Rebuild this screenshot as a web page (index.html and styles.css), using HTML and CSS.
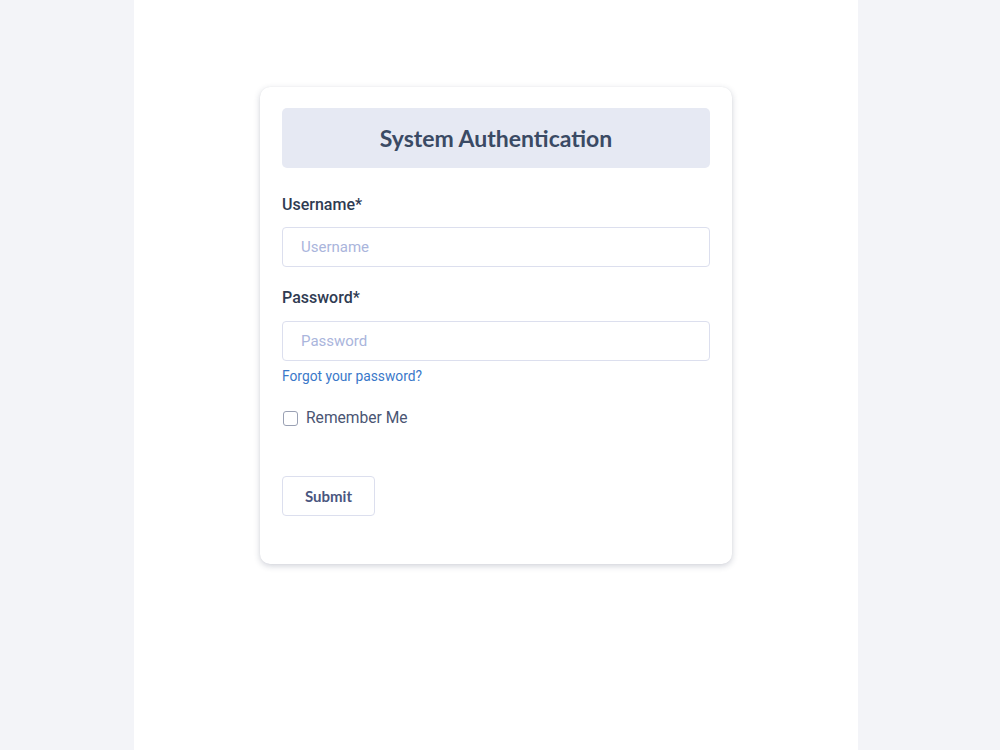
FILE: index.html
```html
<!DOCTYPE html>
<html lang="en">
<head>
    <meta charset="UTF-8">
    <meta name="viewport" content="width=device-width, initial-scale=1.0">
    <title>System Authentication</title>
    <link rel="stylesheet" href="styles.css">
</head>
<body>
    <div class="page">
        <div class="login-card">
            <div class="login-header">
                <h1>System Authentication</h1>
            </div>
            <form class="login-form">
                <label class="field-label" for="username">Username*</label>
                <input class="field-input" type="text" id="username" placeholder="Username">

                <label class="field-label field-label--gap" for="password">Password*</label>
                <input class="field-input" type="password" id="password" placeholder="Password">
                <a class="forgot-link" href="#">Forgot your password?</a>

                <label class="remember">
                    <input type="checkbox" class="remember-box">
                    <span>Remember Me</span>
                </label>

                <button type="submit" class="submit-btn">Submit</button>
            </form>
        </div>
    </div>
</body>
</html>
```

FILE: styles.css
```css
body {
    margin: 0;
    padding: 0;
    background-color: #f3f4f8;
    font-family: Roboto, "Liberation Sans", sans-serif;
    color: #2f3b52;
}

.page {
    width: 724px;
    min-height: 750px;
    margin-left: 134px;
    background-color: #ffffff;
    padding-top: 87px;
    box-sizing: border-box;
}

.login-card {
    width: 472px;
    margin: 0 auto;
    box-sizing: border-box;
    padding: 21px 22px 48px 22px;
    background-color: #ffffff;
    border-radius: 10px;
    box-shadow: 0 2px 6px rgba(40, 50, 80, 0.22), 0 0 1px rgba(40, 50, 80, 0.08);
}

.login-header {
    height: 60px;
    background-color: #e6e9f3;
    border-radius: 5px;
    display: flex;
    align-items: center;
    justify-content: center;
}

.login-header h1 {
    margin: 0;
    font-family: Lato, "Open Sans", sans-serif;
    font-weight: 700;
    font-size: 23px;
    color: #3a4a64;
}

.login-form {
    display: flex;
    flex-direction: column;
    align-items: flex-start;
}

.field-label {
    display: block;
    margin-top: 27px;
    font-size: 16px;
    line-height: 20px;
    font-weight: 500;
    color: #2f3b52;
}

.field-label--gap {
    margin-top: 21px;
}

.field-input {
    width: 100%;
    height: 40px;
    box-sizing: border-box;
    margin-top: 12px;
    padding: 0 18px;
    border: 1px solid #dcdfee;
    border-radius: 4px;
    font-family: Roboto, "Liberation Sans", sans-serif;
    font-size: 15px;
    color: #2f3b52;
    outline: none;
}

.field-label--gap + .field-input {
    margin-top: 13px;
}

.field-input::placeholder {
    color: #aab5dc;
}

.forgot-link {
    margin-top: 5px;
    font-size: 13.8px;
    line-height: 20px;
    color: #3a78c9;
    text-decoration: none;
}

.remember {
    display: flex;
    align-items: center;
    margin-top: 22px;
    height: 20px;
    font-size: 15.6px;
    color: #4a5573;
}

.remember-box {
    appearance: none;
    width: 15px;
    height: 15px;
    margin: 0 8px 0 1px;
    border: 1px solid #9aa1b4;
    border-radius: 3px;
    background-color: #ffffff;
}

.submit-btn {
    margin-top: 48px;
    width: 93px;
    height: 40px;
    padding-bottom: 2px;
    background-color: #ffffff;
    border: 1px solid #dcdfee;
    border-radius: 4px;
    font-family: Lato, "Open Sans", sans-serif;
    font-weight: 700;
    font-size: 15px;
    color: #4a5680;
    cursor: pointer;
}
```
